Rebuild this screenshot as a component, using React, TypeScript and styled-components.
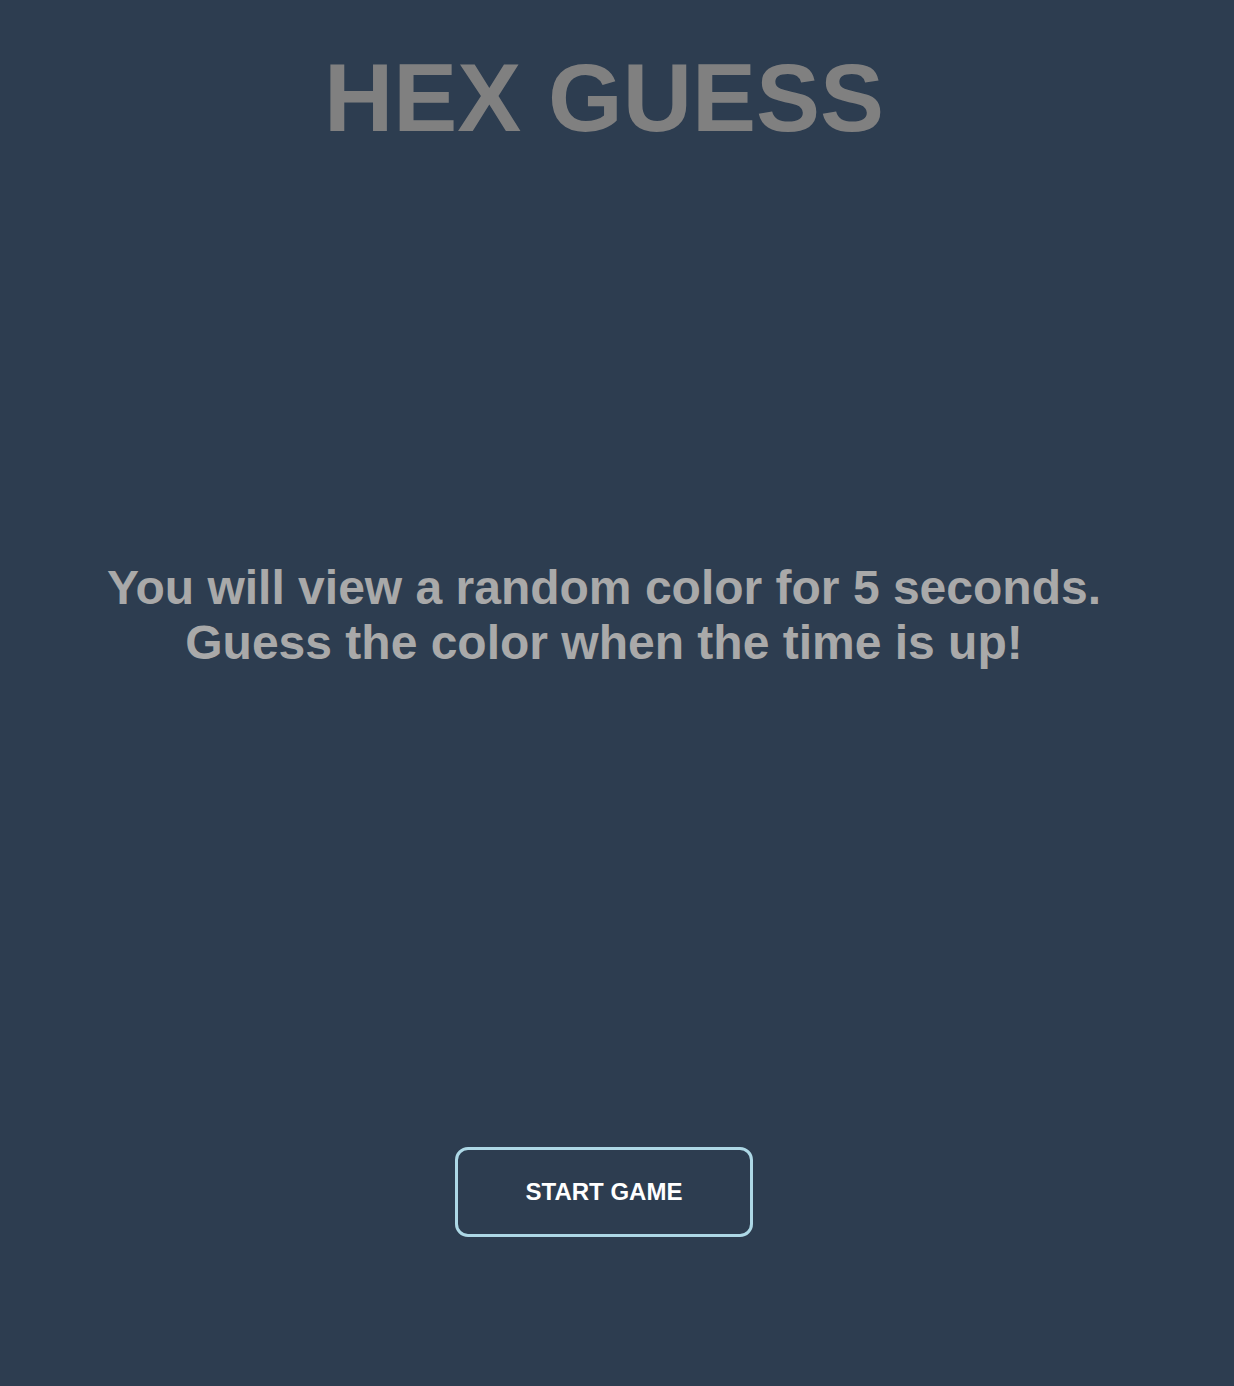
import React from "react";
import styled, { createGlobalStyle } from "styled-components";

const GlobalStyle = createGlobalStyle`
  html, body {
    margin: 0;
    padding: 0;
    background: #2d3d50;
  }
  body {
    font-family: "Liberation Sans", Arial, sans-serif;
  }
`;

const Page = styled.main`
  width: 1208px;
  min-height: 1386px;
  box-sizing: border-box;
  padding-top: 43px;
  display: flex;
  flex-direction: column;
  align-items: center;
  background: #2d3d50;
`;

const Title = styled.h1`
  margin: 0;
  font-size: 96px;
  line-height: 110px;
  font-weight: 700;
  color: #808080;
`;

const Intro = styled.p`
  margin: 407px 0 0;
  font-size: 48px;
  line-height: 55px;
  font-weight: 700;
  color: #a9a9a9;
  text-align: center;
`;

const StartButton = styled.button`
  margin-top: 477px;
  width: 298px;
  height: 90px;
  box-sizing: border-box;
  border: 3px solid #add8e6;
  border-radius: 13px;
  background: transparent;
  color: #ffffff;
  font-family: "Liberation Sans", Arial, sans-serif;
  font-size: 24px;
  font-weight: 700;
  cursor: pointer;
`;

export default function App() {
  return (
    <>
      <GlobalStyle />
      <Page>
        <Title>HEX GUESS</Title>
        <Intro>
          You will view a random color for 5 seconds.
          <br />
          Guess the color when the time is up!
        </Intro>
        <StartButton>START GAME</StartButton>
      </Page>
    </>
  );
}
